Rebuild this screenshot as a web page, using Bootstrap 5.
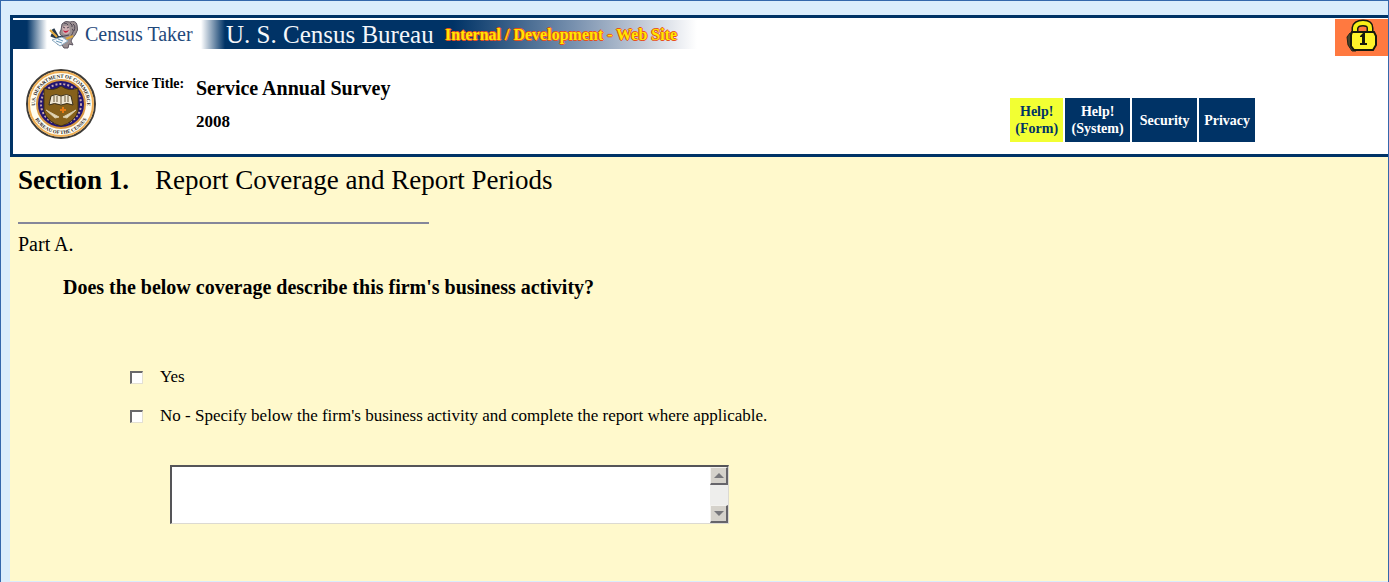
<!DOCTYPE html>
<html lang="en">
<head>
<meta charset="utf-8">
<meta name="viewport" content="width=device-width, initial-scale=1">
<title>Service Annual Survey 2008</title>
<link href="https://cdn.jsdelivr.net/npm/bootstrap@5.3.0/dist/css/bootstrap.min.css" rel="stylesheet">
<script src="https://cdn.jsdelivr.net/npm/bootstrap@5.3.0/dist/js/bootstrap.bundle.min.js" defer></script>
<style>
:root { --navy: #003366; --cream: #fff9cc; --sky: #dbedfc; --frame: #3568ac; }
body { background: var(--sky); color: #000; font-family: "Liberation Serif", "Times New Roman", serif; line-height: 1.2; }
.page-frame { border: solid var(--frame); border-width: 1px 1px 0; padding: 14px 0 0 9px; }
.masthead { background: #fff; border: 3px solid var(--navy); border-right: 0; }
.masthead-top { height: 38px; }
.brand-strip { margin-top: 2px; height: 29px; width: 690px; line-height: 29px; white-space: nowrap;
  background: linear-gradient(90deg, #003366 0, #003366 14px, #fff 34px, #fff 188px, #003366 212px, #003366 440px, #7790ae 560px, #c3cbd8 630px, #fff 684px); }
.brand-mascot { margin: 0 5px 0 35px; }
.brand-taker { color: #1f497c; font-size: 20px; width: 141px; }
.brand-bureau { color: #f4f7fb; font-size: 25px; width: 219px; }
.brand-site { color: #ffe800; font-size: 16px; text-shadow: -1px 0 #e8501c, 1px 0 #e8501c, 0 -1px #e8501c, 0 1px #e8501c; }
.lock-box { background: #ff7940; width: 53px; height: 37px; margin-top: 1px; }
.service { padding: 12px 133px 12px 12px; }
.service-label { font-size: 14px; margin: 8px 0 0 8px; width: 91px; }
.service-name { font-size: 20px; line-height: 34px; margin-top: 3px; }
.service-year { font-size: 17px; }
.help-nav { gap: 2px; margin-top: 30px; }
.help-nav .btn { background: var(--navy); color: #fff; border: 0; border-radius: 0; height: 44px; padding: 0 5px;
  font-size: 14px; line-height: 17px; font-weight: 700; display: flex; align-items: center; justify-content: center; text-align: center; }
.help-nav .btn-form { background: #f2ff33; color: var(--navy); }
.help-nav .btn-wide { min-width: 65px; }
.survey { background: var(--cream); min-height: calc(100vh - 158px); padding: 8px 8px 48px; }
.section-title { font-size: 27px; line-height: 31px; gap: 26px; margin: 0; }
.rule { width: 411px; height: 2px; background: #85879a; border: 0; opacity: 1; margin: 26px 0 8px; }
.part { font-size: 20px; line-height: 24px; margin: 0 0 19px; }
.question { font-size: 20px; line-height: 24px; font-weight: 700; margin: 0 0 68px 45px; float: none; }
.choice { font-size: 17px; line-height: 20px; gap: 17px; margin: 0 0 19px 112px; }
.choice input { appearance: none; width: 13px; height: 13px; margin: 0; background: #fff; border: solid; border-color: #69696b #e3e0d3 #e3e0d3 #69696b; border-width: 2px 1px 1px 2px; }
.answer { width: 559px; height: 59px; margin: 20px 0 0 152px; background: #fff; border: solid; border-width: 2px 1px 1px 2px; border-color: #555558 #dcdad2 #dcdad2 #555558; }
.answer textarea { border: 0; resize: none; overflow: hidden; outline: 0; font-size: 16px; }
.scroll-rail { width: 18px; background: #eeeeec; }
.scroll-rail button { height: 18px; padding: 0; background: #d5d2cb; border: solid; border-width: 1px 2px 2px 1px; border-color: #f3f2ef #66656a #66656a #f3f2ef; display: flex; align-items: center; justify-content: center; }
</style>
</head>
<body>
<div class="page-frame min-vh-100">
  <header class="masthead">
    <div class="masthead-top d-flex justify-content-between align-items-start">
      <div class="brand-strip d-flex">
        <svg class="brand-mascot flex-shrink-0" width="32" height="29" viewBox="-10 0 32 29" aria-hidden="true">
          <path d="M4 4Q7 0 12 2Q18 0 19 5Q21 10 17 15Q14 18 13 21L15 25L11 24L10 28L6 28L4 25L-1 24L2 19L5 17Q0 14 3 10Z" fill="#9b9092" stroke="#5c5560"/>
          <path d="M4 7Q7 5 11 6L12 12Q9 16 5 13Z" fill="#cdb0b2"/>
          <path d="M5 10Q7 12 11 10Q9 14 6 12Z" fill="#c71f40"/>
          <path d="M5 7l2 1M9 8l2-1M12 3q3 2 2 4M15 4q3 2 1 7M14 9q3 1-1 7M6 3q3 0 4 2M2 17l9-2" stroke="#4d4453" fill="none"/>
          <path d="M-5 9L0 18L5 17M-7 15l8 3" fill="none" stroke="#26394c" stroke-width="3"/>
          <path d="M-8 10l7 7M8 19l7-3" stroke="#dfa83c" stroke-width="2"/>
          <path d="M-6 20L4 17L10 21L2 26Z" fill="#f6faff" stroke="#8baac0"/>
          <path d="M-2 21l6 2M0 19l5 2" stroke="#6b9ab7"/>
        </svg>
        <span class="brand-taker">Census Taker</span>
        <span class="brand-bureau">U. S. Census Bureau</span>
        <strong class="brand-site">Internal / Development - Web Site</strong>
      </div>
      <div class="lock-box d-flex justify-content-center">
        <svg width="34" height="36" viewBox="0 0 34 36" role="img" aria-label="Secure">
          <path d="M10 14V9Q11 4 18 4T25 9V14" fill="none" stroke="#171a0d" stroke-width="7"/>
          <path d="M10 14V9Q11 4 18 4T25 9V14" fill="none" stroke="#f7ef18" stroke-width="4"/>
          <path d="M5 14L2 18L3 26L7 32H11V14Z" fill="#45442b" stroke="#202116"/>
          <path d="M7 13H29L31 17V26L28 31H9L6 27V16Z" fill="#fff32a" stroke="#171a0d" stroke-width="2"/>
          <path d="M15 17L18 14H20V24H22V26H15V24H17V18H15Z" fill="#19190c"/>
        </svg>
      </div>
    </div>
    <div class="service d-flex">
      <svg class="flex-shrink-0" width="72" height="72" viewBox="0 0 72 72" role="img" aria-label="Department of Commerce seal">
        <defs><path id="arcTop" d="M11 43A26 26 0 1 1 61 43"/><path id="arcBottom" d="M9 49A30 30 0 0 0 63 49"/></defs>
        <circle cx="36" cy="36" r="34" fill="#fffdf1" stroke="#3f3d39" stroke-width="2"/>
        <circle cx="36" cy="36" r="32" fill="none" stroke="#efaf55" stroke-width="2"/>
        <circle cx="36" cy="36" r="24" fill="#211474" stroke="#d99945" stroke-width="2"/>
        <circle cx="36" cy="36" r="20" fill="none" stroke="#c7a6a7" stroke-width="2" stroke-dasharray="2 2"/>
        <path d="M19 20Q28 24 36 18Q44 24 53 20V43Q50 54 36 58Q22 54 19 43Z" fill="#85601b" stroke="#423311"/>
        <path d="M26 28Q31 25 36 28Q42 25 46 28L48 37Q42 34 36 37Q29 34 24 37Z" fill="#eee6d2" stroke="#3b301b"/>
        <path d="M36 28V36M29 28V34M32 28V34M40 28V34M43 28V34" stroke="#66573a"/>
        <path d="M21 42L34 49L30 50ZM51 42L38 49L42 50Z" fill="#e3d7b6" stroke="#d8cba8"/>
        <path d="M38 39V45M35 42H41" stroke="#e47914" stroke-width="2"/>
        <text font-size="5" font-weight="700" fill="#29251f"><textPath href="#arcTop" startOffset="50%" text-anchor="middle">U.S. DEPARTMENT OF COMMERCE</textPath></text>
        <text font-size="5" font-weight="700" fill="#29251f"><textPath href="#arcBottom" startOffset="50%" text-anchor="middle">BUREAU OF THE CENSUS</textPath></text>
      </svg>
      <strong class="service-label">Service Title:</strong>
      <div class="service-name fw-bold">Service Annual Survey<div class="service-year">2008</div></div>
      <nav class="help-nav d-flex ms-auto" aria-label="Help">
        <button type="button" class="btn btn-form">Help!<br>(Form)</button>
        <button type="button" class="btn btn-wide">Help!<br>(System)</button>
        <button type="button" class="btn btn-wide">Security</button>
        <button type="button" class="btn">Privacy</button>
      </nav>
    </div>
  </header>
  <main class="survey">
    <h1 class="section-title d-flex fw-normal"><strong>Section 1.</strong><span>Report Coverage and Report Periods</span></h1>
    <hr class="rule">
    <h2 class="part fw-normal">Part A.</h2>
    <form>
      <fieldset>
        <legend class="question">Does the below coverage describe this firm's business activity?</legend>
        <div class="choice d-flex align-items-center"><input type="checkbox" id="yes"><label for="yes">Yes</label></div>
        <div class="choice d-flex align-items-center"><input type="checkbox" id="no"><label for="no">No - Specify below the firm's business activity and complete the report where applicable.</label></div>
      </fieldset>
      <div class="answer d-flex">
        <textarea class="flex-grow-1" aria-label="Business activity"></textarea>
        <div class="scroll-rail d-flex flex-column justify-content-between">
          <button type="button" aria-label="Scroll up"><svg width="10" height="6"><path d="M0 5L5 0L10 5Z" fill="#77777b"/></svg></button>
          <button type="button" aria-label="Scroll down"><svg width="10" height="6"><path d="M0 0L5 5L10 0Z" fill="#77777b"/></svg></button>
        </div>
      </div>
    </form>
  </main>
</div>
</body>
</html>
